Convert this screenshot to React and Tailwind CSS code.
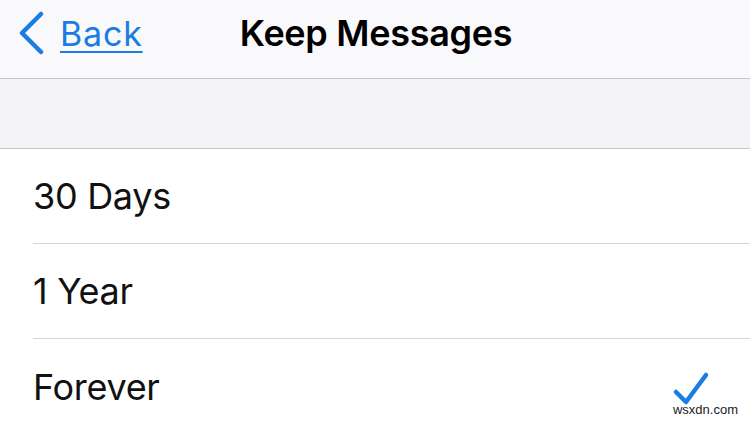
import React from "react";

export default function App() {
  const font = { fontFamily: "Inter, 'Liberation Sans', sans-serif" };
  const rows = [
    { label: "30 Days", checked: false },
    { label: "1 Year", checked: false },
    { label: "Forever", checked: true },
  ];
  return (
    <div className="w-[750px] h-[422px] overflow-hidden bg-white relative" style={font}>
      <div className="h-[79px] bg-[#f9f9fb] border-b border-[#c6c6c8] relative flex items-center">
        <div className="flex items-center pl-[17px] gap-[15px]">
          <svg width="28" height="44" viewBox="0 0 28 44" className="mt-[-12px]">
            <path d="M24 3 L5 22 L24 41" fill="none" stroke="#1b7ce3" strokeWidth="4.5" strokeLinecap="round" strokeLinejoin="round" />
          </svg>
          <span className="text-[34px] leading-none text-[#1b7ce3] underline underline-offset-[5px] decoration-[2px] tracking-[0.8px] mt-[-10px]">Back</span>
        </div>
        <div className="absolute left-0 right-0 top-0 h-[78px] flex items-center justify-center pointer-events-none">
          <span className="text-[36px] font-semibold leading-none text-black tracking-[-0.3px] ml-[2px] mt-[-13px]">Keep Messages</span>
        </div>
      </div>
      <div className="h-[70px] bg-[#f2f2f7] border-b border-[#c6c6c8]" />
      <div className="flex flex-col">
        {rows.map((r, i) => (
          <div key={r.label} className="pl-[33px]">
            <div className={`h-[95px] flex items-center justify-between pr-[40px] ${i < rows.length - 1 ? "border-b border-[#d6d6d8]" : ""}`}>
              <span className="text-[36px] leading-none text-[#111] tracking-[-0.3px]">{r.label}</span>
              {r.checked && (
                <svg width="38" height="36" viewBox="0 0 38 36" className="mt-[5px]">
                  <path d="M4 21 L14 31 L34 4" fill="none" stroke="#1b7ce3" strokeWidth="4.5" strokeLinecap="round" strokeLinejoin="round" />
                </svg>
              )}
            </div>
          </div>
        ))}
      </div>
      <div className="absolute right-[12px] bottom-[6px] text-[13px] leading-none text-[#222]" style={{ fontFamily: "'Liberation Sans', sans-serif" }}>
        wsxdn.com
      </div>
    </div>
  );
}
